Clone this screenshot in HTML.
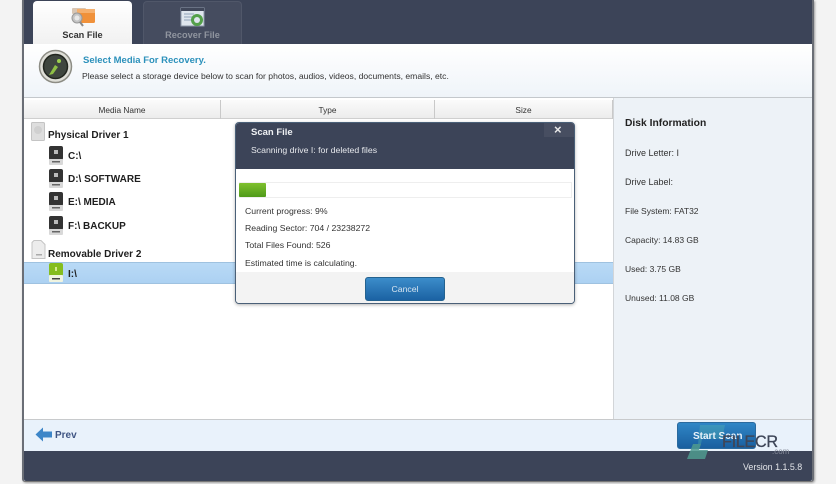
<!DOCTYPE html>
<html><head><meta charset="utf-8">
<style>
html,body{margin:0;padding:0}
body{width:836px;height:484px;background:#f3f3f3;position:relative;overflow:hidden;font-family:"Liberation Sans","DejaVu Sans",sans-serif;font-size:8.3px;color:#2a2a2a}
#w{position:absolute;left:0;top:0;width:836px;height:484px;filter:blur(.35px)}
.a{position:absolute}
.t{position:absolute;white-space:nowrap;line-height:12px}
.b{font-weight:bold}
.h{color:#333;text-align:center}
.drv{color:#1e1e1e;font-weight:bold;font-size:10px}
.lb{font-size:8.5px;color:#333}
.dl{color:#333;font-size:8.7px}
svg{position:absolute;overflow:visible}
</style></head>
<body><div id="w">
<div class="a" style="left:22px;top:0;width:792px;height:482px;background:#fff;border-left:2px solid #6a6e76;border-right:2px solid #6a6e76;border-bottom:1px solid #777;box-sizing:border-box;border-radius:0 0 3px 3px;box-shadow:1px 1px 2px rgba(0,0,0,.35)"></div>
<!-- top bar -->
<div class="a" style="left:24px;top:0;width:788px;height:44px;background:#3c4458"></div>
<div class="a" style="left:33px;top:1px;width:99px;height:43px;background:linear-gradient(#fff,#f1f1f1);border-radius:4px 4px 0 0"></div>
<div class="a" style="left:143px;top:1px;width:99px;height:43px;background:#454c5f;border:1px solid #505769;border-bottom:0;box-sizing:border-box;border-radius:4px 4px 0 0"></div>
<svg style="left:70px;top:6px" width="26" height="22" viewBox="0 0 26 22"><rect x="2" y="2" width="14" height="6" rx="1" fill="#d8c6b4"/><rect x="7" y="3" width="18" height="14" rx="1.5" fill="#f0913a"/><rect x="7" y="3" width="18" height="4" fill="#f5b06e"/><circle cx="7" cy="12" r="5" fill="#c4c4c4" stroke="#999"/><circle cx="7" cy="12" r="2.5" fill="#e8e8e8"/><path d="M10 16l3 4" stroke="#8a8a8a" stroke-width="2"/></svg>
<div class="t b" style="left:33px;top:28px;width:99px;text-align:center;color:#333;font-size:9.200px;padding-top:1px">Scan File</div>
<svg style="left:180px;top:5px" width="26" height="22" viewBox="0 0 26 22"><rect x="1" y="3" width="23" height="18" fill="#dfe6ee" stroke="#8d98a8"/><rect x="1" y="3" width="23" height="3" fill="#41485a"/><path d="M4 9h10M4 12h8M4 15h8" stroke="#8fa2b8"/><circle cx="17" cy="15" r="6" fill="#54a04a"/><circle cx="17" cy="15" r="3" fill="#dfe6ee"/></svg>
<div class="t b" style="left:143px;top:28px;width:99px;text-align:center;color:#90959f;font-size:9.200px;padding-top:1px">Recover File</div>
<!-- header -->
<div class="a" style="left:24px;top:44px;width:788px;height:53px;background:linear-gradient(#fff,#eff4f9);border-bottom:1px solid #c4c8cc"></div>
<svg style="left:38px;top:49px" width="36" height="38" viewBox="0 0 36 38"><circle cx="17.500" cy="17.500" r="16" fill="#dfdfd8" stroke="#8d8d85" stroke-width="1.500"/><circle cx="17.500" cy="17.500" r="12" fill="#3f463f" stroke="#22261f" stroke-width="1.500"/><path d="M11 26l6-10 3 2-5 7z" fill="#8fc045"/><circle cx="21" cy="12" r="2" fill="#9ccf4d"/></svg>
<div class="t b" style="left:83px;top:55px;color:#2c91bb;font-size:9.500px">Select Media For Recovery.</div>
<div class="t" style="left:82px;top:70px;color:#333;font-size:8.600px">Please select a storage device below to scan for photos, audios, videos, documents, emails, etc.</div>
<!-- table head -->
<div class="a" style="left:24px;top:100px;width:589px;height:18px;background:linear-gradient(#fbfbfb,#ececec);border-bottom:1px solid #cfcfcf"></div>
<div class="a" style="left:220px;top:100px;width:1px;height:19px;background:#c9c9c9"></div>
<div class="a" style="left:434px;top:100px;width:1px;height:19px;background:#c9c9c9"></div>
<div class="a" style="left:612px;top:100px;width:1px;height:19px;background:#c9c9c9"></div>
<div class="t h" style="left:24px;top:104px;width:196px">Media Name</div>
<div class="t h" style="left:221px;top:104px;width:213px">Type</div>
<div class="t h" style="left:435px;top:104px;width:177px">Size</div>
<!-- tree -->
<div class="a" style="left:24px;top:262px;width:589px;height:22px;background:linear-gradient(#b9daf6,#acd1f2);border-top:1px solid #9fc2e0;border-bottom:1px solid #9fc2e0;box-sizing:border-box"></div>
<svg style="left:31px;top:122px" width="14" height="19" viewBox="0 0 14 19"><rect x=".5" y=".5" width="13" height="18" rx="1" fill="#dedede" stroke="#c4c4c4"/><circle cx="7" cy="8" r="4" fill="#d0d0d0"/></svg>
<div class="t drv" style="left:48px;top:130px">Physical Driver 1</div>
<svg width="0" height="0"><defs><g id="hd"><rect x="0" y="0" width="14" height="14" rx="2" fill="#333"/><rect x="0" y="13" width="14" height="6" rx="1" fill="#d8d8d8"/><rect x="5" y="4" width="4" height="4" fill="#bbb"/><rect x="3" y="15" width="8" height="1.500" fill="#666"/></g></defs></svg>
<svg style="left:49px;top:146px" width="14" height="19"><use href="#hd"/></svg>
<div class="t drv" style="left:68px;top:151px">C:\</div>
<svg style="left:49px;top:169px" width="14" height="19"><use href="#hd"/></svg>
<div class="t drv" style="left:68px;top:174px">D:\ SOFTWARE</div>
<svg style="left:49px;top:192px" width="14" height="19"><use href="#hd"/></svg>
<div class="t drv" style="left:68px;top:197px">E:\ MEDIA</div>
<svg style="left:49px;top:216px" width="14" height="19"><use href="#hd"/></svg>
<div class="t drv" style="left:68px;top:221px">F:\ BACKUP</div>
<svg style="left:31px;top:240px" width="15" height="19" viewBox="0 0 15 19"><path d="M3 .5h7l4 4v14H1V2.500z" fill="#ececec" stroke="#c4c4c4"/><rect x="5" y="14" width="6" height="1.500" fill="#aaa"/></svg>
<div class="t drv" style="left:48px;top:249px">Removable Driver 2</div>
<svg style="left:49px;top:263px" width="14" height="20" viewBox="0 0 14 20"><rect x="0" y="0" width="14" height="13" rx="2" fill="#85bd1e"/><rect x="0" y="12" width="14" height="7" rx="1" fill="#f0f4e0"/><rect x="3" y="15" width="8" height="1.500" fill="#444"/><rect x="6" y="4" width="2" height="4" fill="#d5ea90"/></svg>
<div class="t drv" style="left:68px;top:269px">I:\</div>
<!-- side panel -->
<div class="a" style="left:613px;top:98px;width:199px;height:321px;background:#edf2f7;border-left:1px solid #d2d5d8;box-sizing:border-box"></div>
<div class="t b" style="left:625px;top:118px;font-size:10.300px;color:#222">Disk Information</div>
<div class="t lb" style="left:625px;top:147px;font-size:9px">Drive Letter: I</div>
<div class="t lb" style="left:625px;top:176px;font-size:9px">Drive Label:</div>
<div class="t lb" style="left:625px;top:205px">File System: FAT32</div>
<div class="t lb" style="left:625px;top:234px">Capacity: 14.83 GB</div>
<div class="t lb" style="left:625px;top:263px">Used: 3.75 GB</div>
<div class="t lb" style="left:625px;top:292px">Unused: 11.08 GB</div>
<!-- footer -->
<div class="a" style="left:24px;top:419px;width:788px;height:32px;background:#e9f2fb;border-top:1px solid #c8cacc;box-sizing:border-box"></div>
<div class="a" style="left:24px;top:451px;width:788px;height:30px;background:#3c4458;border-radius:0 0 2px 2px"></div>
<svg style="left:35px;top:427px" width="17" height="15" viewBox="0 0 17 15"><path d="M8 .5L.5 7.500 8 14.500V10.500h9v-6H8z" fill="#3d86c8"/></svg>
<div class="t b" style="left:55px;top:430px;color:#3f5583;font-size:10px">Prev</div>
<div class="a" style="left:677px;top:422px;width:79px;height:27px;background:linear-gradient(#2f86c6,#1a5f9f);border-radius:3px;border:1px solid #2a6a9e;box-sizing:border-box"></div>
<svg style="left:0;top:0" width="836" height="484"><path d="M700 425h25l-3 14h-20l-1 5h-3z" fill="#58b8b0" opacity=".35"/><path d="M693 444h8l-2 6h9l-3 9h-18z" fill="#4f9a8e" opacity=".85"/></svg>
<div class="t b" style="left:693px;top:431px;color:#e8f2fa;font-size:10px">Start Scan</div>
<div class="t" style="left:722px;top:432px;color:#3e4658;font-size:16.200px;line-height:20px;letter-spacing:-.3px;-webkit-text-stroke:.3px #3e4658">FILECR</div>
<div class="t" style="left:772px;top:446px;color:#868c9a;font-size:8px">.com</div>
<div class="t" style="left:743px;top:461px;color:#e2e4e8;font-size:8.900px">Version 1.1.5.8</div>
<!-- dialog -->
<div class="a" style="left:235px;top:122px;width:340px;height:182px;background:#fff;border:1px solid #4a6078;border-radius:4px;box-sizing:border-box;box-shadow:0 1px 3px rgba(0,0,0,.3);overflow:hidden">
  <div class="a" style="left:0;top:0;width:338px;height:46px;background:#3c4458"></div>
  <div class="a" style="left:308px;top:0;width:30px;height:14px;background:#474e61"></div>
  <div class="a" style="left:0;top:149px;width:338px;height:32px;background:#f3f3f3"></div>
  <div class="a" style="left:3px;top:59px;width:333px;height:16px;background:#fff;border:1px solid #eee;box-sizing:border-box"></div>
  <div class="a" style="left:3px;top:60px;width:27px;height:14px;background:linear-gradient(#7fc02e,#4f9a1a);border-radius:1px"></div>
</div>
<div class="t" style="left:554px;top:123px;color:#e8e8e8;font-size:13px;font-weight:bold;line-height:13px">×</div>
<div class="t b" style="left:251px;top:127px;color:#eef0f3;font-size:9.500px">Scan File</div>
<div class="t dl" style="left:251px;top:144px;color:#e6e8ec">Scanning drive I: for deleted files</div>
<div class="t dl" style="left:245px;top:205px">Current progress: 9%</div>
<div class="t dl" style="left:245px;top:222px">Reading Sector: 704 / 23238272</div>
<div class="t dl" style="left:245px;top:239px">Total Files Found: 526</div>
<div class="t dl" style="left:245px;top:257px">Estimated time is calculating.</div>
<div class="a" style="left:365px;top:277px;width:80px;height:24px;background:linear-gradient(#3c8dca,#1b62a3);border:1px solid #24628f;border-radius:3px;box-sizing:border-box"></div>
<div class="t" style="left:365px;top:283px;width:80px;text-align:center;color:#d6e4f0;font-size:8.700px">Cancel</div>
</div></body></html>
